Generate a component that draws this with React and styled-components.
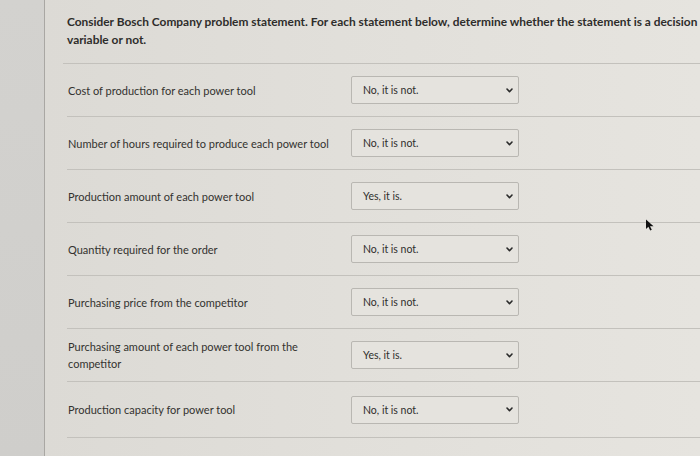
import React from 'react';
import styled, { createGlobalStyle } from 'styled-components';

var GlobalStyle = createGlobalStyle`
  html, body {
    margin: 0;
    padding: 0;
    overflow: hidden;
  }
  body {
    font-family: Lato, "Open Sans", sans-serif;
    background: #d2d0cc;
  }
`;

var rows = [
  { label: 'Cost of production for each power tool', value: 'No, it is not.' },
  { label: 'Number of hours required to produce each power tool', value: 'No, it is not.' },
  { label: 'Production amount of each power tool', value: 'Yes, it is.' },
  { label: 'Quantity required for the order', value: 'No, it is not.' },
  { label: 'Purchasing price from the competitor', value: 'No, it is not.' },
  { label: 'Purchasing amount of each power tool from the competitor', value: 'Yes, it is.' },
  { label: 'Production capacity for power tool', value: 'No, it is not.' },
];

var Chevron = () => (
  <svg width="7" height="5" viewBox="0 0 7 5">
    <path d="M1 1 L3.5 3.7 L6 1" fill="none" stroke="#2a2a2a" strokeWidth="1.6" strokeLinecap="round" strokeLinejoin="round" />
  </svg>
);

var Pointer = () => (
  <svg width="10" height="12" viewBox="0 0 10 12">
    <path d="M1 0.5 L1 10 L3.4 7.8 L5.2 11.5 L6.8 10.8 L5 7.2 L8.5 7.2 Z" fill="#111" />
  </svg>
);

var App = () => {
  return (
    <>
      <GlobalStyle />
      <Page>
        <SideStrip />
        <Panel>
          <Title>
            Consider Bosch Company problem statement. For each statement below, determine whether the statement is a decision
            <br />
            variable or not.
          </Title>
          <List>
            {rows.map((row, i) => (
              <Row key={i} last={i === rows.length - 1}>
                <Label>{row.label}</Label>
                <Select>
                  <span>{row.value}</span>
                  <Chevron />
                </Select>
              </Row>
            ))}
          </List>
          <CursorMark>
            <Pointer />
          </CursorMark>
        </Panel>
      </Page>
    </>
  );
};

// styled components
var Page = styled.div`
  display: flex;
  width: 700px;
  height: 456px;
  overflow: hidden;
`;

var SideStrip = styled.div`
  width: 44px;
  flex-shrink: 0;
  background: linear-gradient(180deg, #d3d2cf 0%, #cfcecb 100%);
  border-right: 1px solid #a9a7a3;
`;

var Panel = styled.div`
  position: relative;
  flex: 1;
  min-width: 0;
  padding: 13px 0 0 22px;
  background: linear-gradient(90deg, #dcdad5 0%, #e1dfda 45%, #e6e4df 100%);
`;

var Title = styled.div`
  font-size: 11.9px;
  font-weight: 700;
  line-height: 18px;
  color: #2e2d2b;
  white-space: nowrap;
  padding-bottom: 14px;
  border-bottom: 1px solid #c3c1bc;
  margin-left: -4px;
  padding-left: 4px;
`;

var List = styled.div`
  display: flex;
  flex-direction: column;
`;

var Row = styled.div`
  display: grid;
  grid-template-columns: 284px 168px;
  align-items: center;
  height: ${props => (props.last ? '55px' : '52px')};
  border-bottom: 1px solid #c3c1bc;
`;

var Label = styled.div`
  font-size: 11px;
  line-height: 17px;
  color: #33322f;
  padding-right: 8px;
  padding-left: 1px;
`;

var Select = styled.div`
  display: flex;
  align-items: center;
  justify-content: space-between;
  height: 28px;
  box-sizing: border-box;
  padding: 0 5px 0 11px;
  border: 1px solid #b9b7b2;
  border-radius: 2px;
  background: #e5e3de;
  font-size: 10.5px;
  color: #2f2e2c;
`;

var CursorMark = styled.div`
  position: absolute;
  left: 600px;
  top: 215px;
`;

export default App;
